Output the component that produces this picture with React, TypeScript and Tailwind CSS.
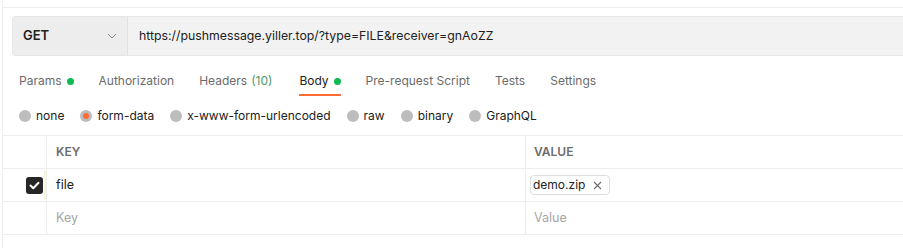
import React from "react";

const Dot = () => <span className="inline-block w-[7px] h-[7px] rounded-full bg-[#0cbb52] ml-[5px] mt-[1px]" />;

function Radio({ label, active }: { label: string; active?: boolean }) {
  return (
    <div className="flex items-center gap-[5px]">
      <span className="w-[12px] h-[12px] rounded-full bg-[#bdbdbd] flex items-center justify-center">
        {active && <span className="w-[6px] h-[6px] rounded-full bg-[#ff6c37]" />}
      </span>
      <span className="text-[#212121]">{label}</span>
    </div>
  );
}

export default function App() {
  return (
    <div
      className="w-[903px] h-[248px] bg-white text-[12px] overflow-hidden"
      style={{ fontFamily: "Inter, 'Noto Sans', sans-serif" }}
    >
      <div className="ml-[2px] h-full border-l border-[#ededed]">
        <div className="h-[7px]" />
        <div className="border-t border-[#ededed] pt-[8px] pl-[9px]">
          <div className="flex h-[40px] bg-[#f2f2f2] border border-[#e6e6e6] rounded-l-[4px] border-r-0">
            <div className="w-[115px] flex items-center justify-between pl-[10px] pr-[10px] border-r border-[#e0e0e0] bg-[#ededed] rounded-l-[4px]">
              <span className="font-semibold text-[13px] text-[#212121]">GET</span>
              <svg width="10" height="6" viewBox="0 0 10 6" fill="none" stroke="#808080" strokeWidth="1">
                <path d="M1 1l4 4 4-4" />
              </svg>
            </div>
            <div className="flex items-center pl-[11px] text-[12.3px] text-[#212121]">
              https://pushmessage.yiller.top/?type=FILE&amp;receiver=gnAoZZ
            </div>
          </div>
        </div>
        <div className="flex pl-[16px] gap-[25px] mt-[13px] text-[12px] text-[#6b6b6b]">
          <div className="flex items-center h-[24px]">Params<Dot /></div>
          <div className="flex items-center h-[24px]">Authorization</div>
          <div className="flex items-center h-[24px]">Headers<span className="ml-[4px] text-[#4c9a6a]">(10)</span></div>
          <div className="flex items-center h-[24px] text-[#212121] relative ml-[2px]">
            Body<Dot />
            <span className="absolute left-0 right-0 bottom-[-3px] h-[2px] bg-[#ff6c37]" />
          </div>
          <div className="flex items-center h-[24px]">Pre-request Script</div>
          <div className="flex items-center h-[24px]">Tests</div>
          <div className="flex items-center h-[24px]">Settings</div>
        </div>
        <div className="flex pl-[16px] gap-[16px] mt-[13px] h-[20px] items-center">
          <Radio label="none" />
          <Radio label="form-data" active />
          <Radio label="x-www-form-urlencoded" />
          <Radio label="raw" />
          <Radio label="binary" />
          <Radio label="GraphQL" />
        </div>
        <div className="mt-[9px] border-t border-[#ededed]">
          <div className="flex h-[33px] border-b border-[#ededed]">
            <div className="w-[44px] border-r border-[#ededed]" />
            <div className="w-[479px] border-r border-[#ededed] flex items-center pl-[9px] text-[12px] font-semibold text-[#6b6b6b]">KEY</div>
            <div className="flex-1 flex items-center pl-[8px] text-[12px] font-semibold text-[#6b6b6b]">VALUE</div>
          </div>
          <div className="flex h-[33px] border-b border-[#ededed]">
            <div className="w-[44px] border-r border-[#ededed] flex items-center justify-end relative">
              <span className="mr-[3px] w-[17px] h-[17px] rounded-[3px] bg-[#262626] flex items-center justify-center">
                <svg width="11" height="9" viewBox="0 0 11 9" fill="none" stroke="white" strokeWidth="2" strokeLinecap="round" strokeLinejoin="round">
                  <path d="M1.5 4.5l2.8 2.8L9.5 1.8" />
                </svg>
              </span>
              <span className="absolute top-[1px] bottom-[1px] right-0 w-[2px] bg-[#fdf3d6]" />
            </div>
            <div className="w-[479px] border-r border-[#ededed] flex items-center pl-[9px] text-[12.5px] text-[#212121]">file</div>
            <div className="flex-1 flex items-center pl-[4px]">
              <span className="flex items-center h-[20px] px-[2px] border border-[#dedede] rounded-[4px] text-[12px] text-[#212121]">
                demo.zip
                <svg className="ml-[8px] mr-[5px]" width="9" height="9" viewBox="0 0 9 9" stroke="#6b6b6b" strokeWidth="1.1">
                  <path d="M1 1l7 7M8 1l-7 7" />
                </svg>
              </span>
            </div>
          </div>
          <div className="flex h-[33px] border-b border-[#ededed]">
            <div className="w-[44px] border-r border-[#ededed]" />
            <div className="w-[479px] border-r border-[#ededed] flex items-center pl-[9px] text-[12.5px] text-[#a6a6a6]">Key</div>
            <div className="flex-1 flex items-center pl-[8px] text-[12.5px] text-[#a6a6a6]">Value</div>
          </div>
        </div>
      </div>
    </div>
  );
}
